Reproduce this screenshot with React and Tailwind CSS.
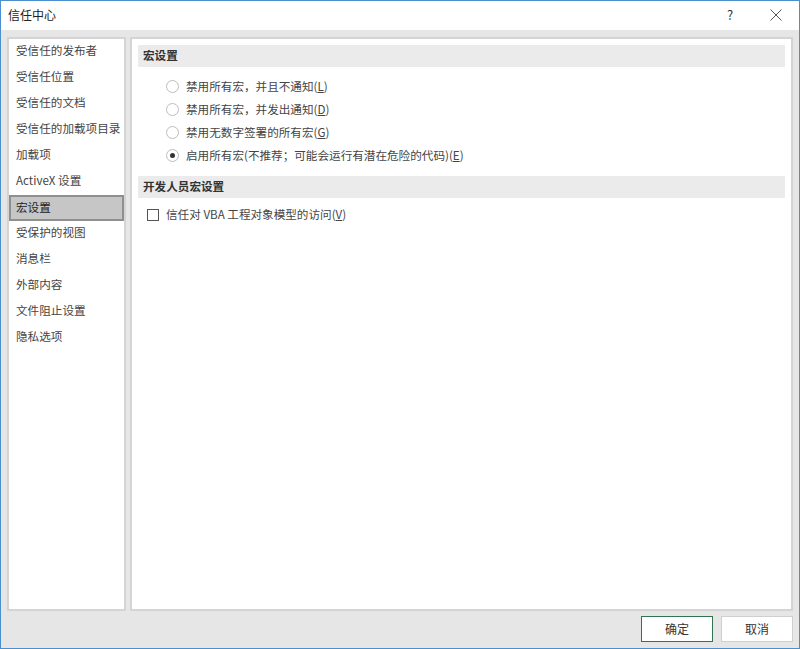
import React from 'react';

const navItems = [
  '受信任的发布者',
  '受信任位置',
  '受信任的文档',
  '受信任的加载项目录',
  '加载项',
  'ActiveX 设置',
  '宏设置',
  '受保护的视图',
  '消息栏',
  '外部内容',
  '文件阻止设置',
  '隐私选项',
];

const radios = [
  { label: '禁用所有宏，并且不通知', key: 'L' },
  { label: '禁用所有宏，并发出通知', key: 'D' },
  { label: '禁用无数字签署的所有宏', key: 'G' },
  { label: '启用所有宏(不推荐；可能会运行有潜在危险的代码)', key: 'E', checked: true },
];

function Radio({ checked }) {
  return (
    <span className="w-[13px] h-[13px] rounded-full border border-[#bdbdbd] bg-white flex items-center justify-center shrink-0">
      {checked && <span className="w-[5px] h-[5px] rounded-full bg-[#333]" />}
    </span>
  );
}

export default function App() {
  return (
    <div
      className="w-[800px] h-[649px] flex flex-col bg-[#e6e6e6] border border-[#4a90d0] text-[11.6px] text-[#444] overflow-hidden"
      style={{ fontFamily: '"Noto Sans CJK SC", "Noto Sans", sans-serif' }}
    >
      {/* title bar */}
      <div className="h-[29px] bg-white flex items-center justify-between shrink-0 pb-[1px]">
        <span className="pl-[7px] text-[#222] text-[12px]">信任中心</span>
        <div className="flex items-center">
          <span className="w-[46px] text-center text-[#333] text-[13px]">?</span>
          <span className="w-[46px] flex justify-center">
            <svg width="12" height="12" viewBox="0 0 12 12">
              <path d="M0.5 0.5L11.5 11.5M11.5 0.5L0.5 11.5" stroke="#555" strokeWidth="1" />
            </svg>
          </span>
        </div>
      </div>

      <div className="flex-1 flex gap-[4px] px-[6px] pt-[7px] min-h-0">
        {/* left nav */}
        <div className="w-[119px] bg-white border-2 border-[#d4d4d4] flex flex-col">
          {navItems.map((item) => (
            <div
              key={item}
              className={
                item === '宏设置'
                  ? 'h-[26px] flex items-center pl-[5px] pb-[1px] bg-[#c6c6c6] border-2 border-[#8f8f8f] text-[#222]'
                  : 'h-[26px] flex items-center pl-[7px] pb-[3px]'
              }
            >
              {item}
            </div>
          ))}
        </div>

        {/* right content */}
        <div className="flex-1 bg-white border-2 border-[#d4d4d4] px-[6px] pt-[6px]">
          <div className="h-[22px] bg-[#ebebeb] flex items-center pl-[5px] font-bold text-[#333]">宏设置</div>
          <div className="flex flex-col pl-[28px] pt-[8px] pb-[9px]">
            {radios.map((r) => (
              <div key={r.key} className="h-[23px] flex items-center gap-[7px]">
                <Radio checked={r.checked} />
                <span>
                  {r.label}(<span className="underline">{r.key}</span>)
                </span>
              </div>
            ))}
          </div>
          <div className="h-[22px] bg-[#ebebeb] flex items-center pl-[5px] font-bold text-[#333]">开发人员宏设置</div>
          <div className="flex items-center gap-[7px] pl-[9px] pt-[8px]">
            <span className="w-[12px] h-[12px] border border-[#555] bg-white shrink-0" />
            <span>
              信任对 VBA 工程对象模型的访问(<span className="underline">V</span>)
            </span>
          </div>
        </div>
      </div>

      {/* footer */}
      <div className="h-[37px] flex items-center justify-end gap-[8px] pr-[6px] pb-[2px] shrink-0">
        <button className="w-[72px] h-[26px] bg-white border border-[#2e7550] text-[#333] text-[12px]">确定</button>
        <button className="w-[72px] h-[26px] bg-white border border-[#cfcfcf] text-[#333] text-[12px]">取消</button>
      </div>
    </div>
  );
}
